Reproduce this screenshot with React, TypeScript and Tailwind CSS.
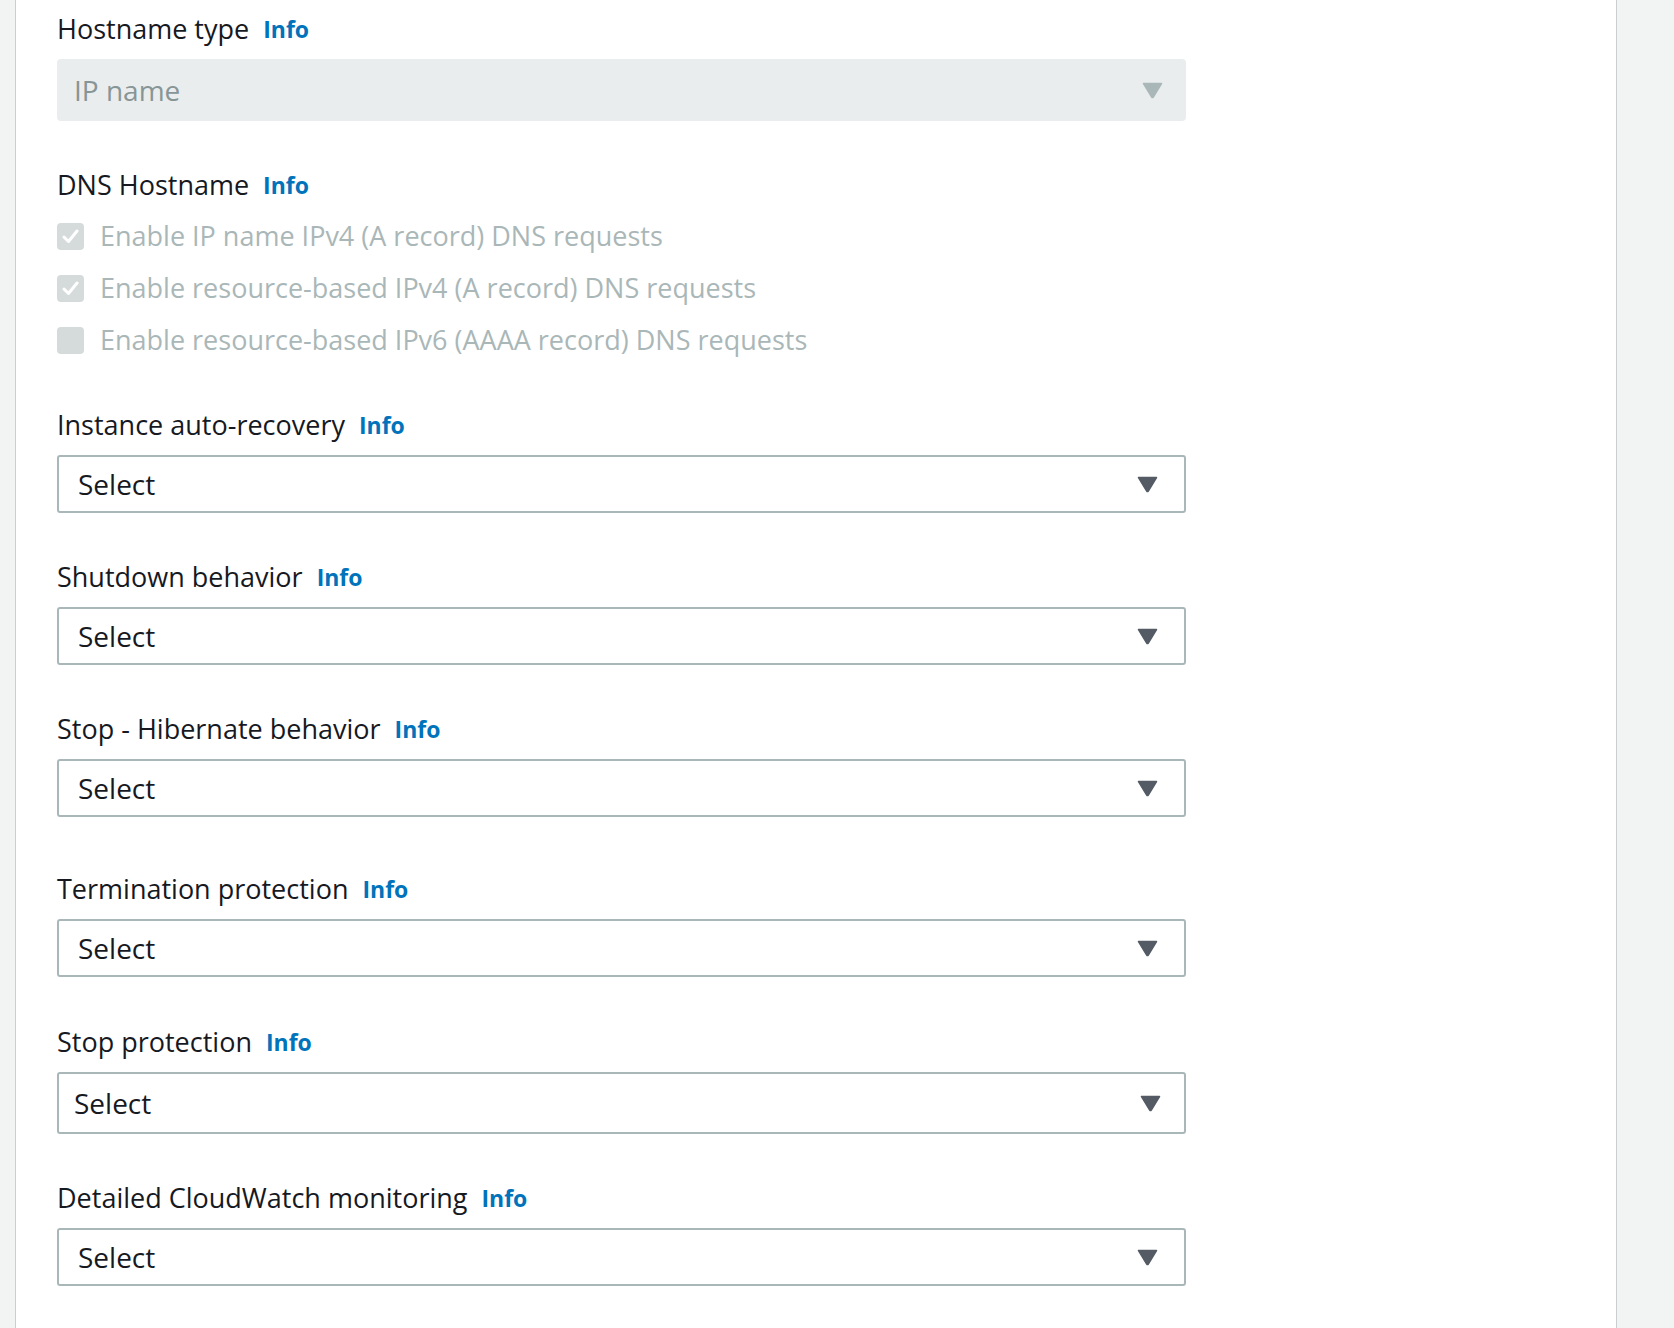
const font = { fontFamily: '"Open Sans", "Noto Sans", sans-serif' };

function Caret({ disabled = false }: { disabled?: boolean }) {
  return (
    <svg width="21" height="17" viewBox="0 0 21 17" className="shrink-0">
      <path
        d="M1.5 1.5 H19.5 L11.3 15 Q10.5 16.2 9.7 15 Z"
        fill={disabled ? "#aab7b8" : "#545b64"}
        stroke={disabled ? "#aab7b8" : "#545b64"}
        strokeWidth="1.5"
        strokeLinejoin="round"
      />
    </svg>
  );
}

function Label({ text, className = "" }: { text: string; className?: string }) {
  return (
    <div className={`flex h-[36px] items-center ${className}`}>
      <span className="text-[27px] text-[#16191f]">{text}</span>
      <span className="ml-[14px] text-[23px] font-bold text-[#0073bb]">Info</span>
    </div>
  );
}

function SelectBox({ tall = false }: { tall?: boolean }) {
  return (
    <div
      className={`mt-[12px] flex w-[1129px] items-center justify-between rounded-[3px] border-2 border-[#aab7b8] bg-white ${
        tall ? "h-[62px] pl-[15px] pr-[23px]" : "h-[58px] pl-[19px] pr-[26px]"
      }`}
    >
      <span className="text-[28px] text-[#16191f]">Select</span>
      <Caret />
    </div>
  );
}

function Check({ checked, text }: { checked: boolean; text: string }) {
  return (
    <div className="flex h-[52px] items-center">
      <div className="flex h-[27px] w-[27px] items-center justify-center rounded-[4px] bg-[#d5dbdb]">
        {checked && (
          <svg width="17" height="15" viewBox="0 0 17 15">
            <path d="M2 8 L6.5 12.5 L15 2" fill="none" stroke="white" strokeWidth="3" strokeLinecap="round" strokeLinejoin="round" />
          </svg>
        )}
      </div>
      <span className="ml-[16px] text-[27px] text-[#aab7b8]">{text}</span>
    </div>
  );
}

export default function App() {
  return (
    <div className="flex min-h-screen bg-[#f2f3f3]" style={font}>
      <div className="w-[15px] shrink-0" />
      <div className="w-[1602px] shrink-0 border-x border-[#c9cfcf] bg-white pb-[40px] pl-[41px] pt-[11px]">
        <Label text="Hostname type" />
        <div className="mt-[12px] flex h-[62px] w-[1129px] items-center justify-between rounded-[4px] bg-[#eaeded] pl-[17px] pr-[23px]">
          <span className="text-[28px] text-[#879596]">IP name</span>
          <Caret disabled />
        </div>

        <Label text="DNS Hostname" className="mt-[46px]" />
        <div className="mt-[7px]">
          <Check checked text="Enable IP name IPv4 (A record) DNS requests" />
          <Check checked text="Enable resource-based IPv4 (A record) DNS requests" />
          <Check checked={false} text="Enable resource-based IPv6 (AAAA record) DNS requests" />
        </div>

        <Label text="Instance auto-recovery" className="mt-[41px]" />
        <SelectBox />

        <Label text="Shutdown behavior" className="mt-[46px]" />
        <SelectBox />

        <Label text="Stop - Hibernate behavior" className="mt-[46px]" />
        <SelectBox />

        <Label text="Termination protection" className="mt-[54px]" />
        <SelectBox />

        <Label text="Stop protection" className="mt-[47px]" />
        <SelectBox tall />

        <Label text="Detailed CloudWatch monitoring" className="mt-[46px]" />
        <SelectBox />
      </div>
    </div>
  );
}
